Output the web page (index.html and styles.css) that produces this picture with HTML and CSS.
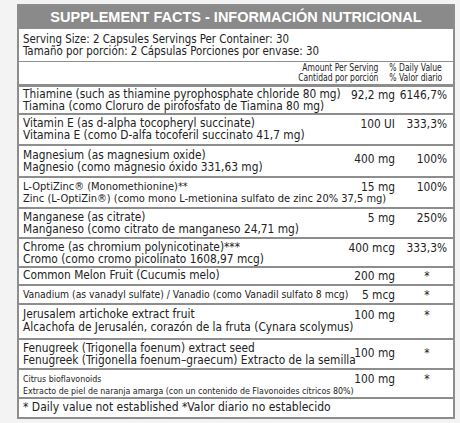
FILE: index.html
```html
<!DOCTYPE html>
<html lang="es">
<head>
    <meta charset="UTF-8">
    <meta name="viewport" content="width=device-width, initial-scale=1.0">
    <title>Supplement Facts</title>
    <link rel="stylesheet" href="styles.css">
</head>
<body>
    <div class="facts">
        <div class="facts-title">SUPPLEMENT FACTS - INFORMACIÓN NUTRICIONAL</div>

        <div class="serving">
            <div>Serving Size: 2 Capsules Servings Per Container: 30</div>
            <div>Tamaño por porción: 2 Cápsulas Porciones por envase: 30</div>
        </div>

        <div class="col-head">
            <div class="col-amount">Amount Per Serving<br>Cantidad por porción</div>
            <div class="col-dv">% Daily Value<br>% Valor diario</div>
        </div>

        <div class="row row-thiamine">
            <div class="name">
                <div>Thiamine (such as thiamine pyrophosphate chloride 80 mg)</div>
                <div>Tiamina (como Cloruro de pirofosfato de Tiamina 80 mg)</div>
            </div>
            <div class="amount">92,2 mg</div>
            <div class="dv">6146,7%</div>
        </div>

        <div class="row">
            <div class="name">
                <div>Vitamin E (as d-alpha tocopheryl succinate)</div>
                <div>Vitamina E (como D-alfa tocoferil succinato 41,7 mg)</div>
            </div>
            <div class="amount">100 UI</div>
            <div class="dv">333,3%</div>
        </div>

        <div class="row row-magnesium">
            <div class="name">
                <div>Magnesium (as magnesium oxide)</div>
                <div>Magnesio (como magnesio óxido 331,63 mg)</div>
            </div>
            <div class="amount">400 mg</div>
            <div class="dv">100%</div>
        </div>

        <div class="row row-zinc">
            <div class="name small">
                <div>L-OptiZinc® (Monomethionine)**</div>
                <div>Zinc (L-OptiZin®) (como mono L-metionina sulfato de zinc 20% 37,5 mg)</div>
            </div>
            <div class="amount">15 mg</div>
            <div class="dv">100%</div>
        </div>

        <div class="row row-manganese">
            <div class="name">
                <div>Manganese (as citrate)</div>
                <div>Manganeso (como citrato de manganeso 24,71 mg)</div>
            </div>
            <div class="amount">5 mg</div>
            <div class="dv">250%</div>
        </div>

        <div class="row row-chrome">
            <div class="name">
                <div>Chrome (as chromium polynicotinate)***</div>
                <div>Cromo (como cromo picolinato 1608,97 mcg)</div>
            </div>
            <div class="amount">400 mcg</div>
            <div class="dv">333,3%</div>
        </div>

        <div class="row row-single row-melon">
            <div class="name">
                <div>Common Melon Fruit (Cucumis melo)</div>
            </div>
            <div class="amount">200 mg</div>
            <div class="dv star">*</div>
        </div>

        <div class="row row-single">
            <div class="name narrow">
                <div>Vanadium (as vanadyl sulfate) / Vanadio (como Vanadil sulfato 8 mcg)</div>
            </div>
            <div class="amount">5 mcg</div>
            <div class="dv star">*</div>
        </div>

        <div class="row row-loose">
            <div class="name">
                <div>Jerusalem artichoke extract fruit</div>
                <div>Alcachofa de Jerusalén, corazón de la fruta (Cynara scolymus)</div>
            </div>
            <div class="amount">100 mg</div>
            <div class="dv star">*</div>
        </div>

        <div class="row row-fenugreek">
            <div class="name">
                <div>Fenugreek (Trigonella foenum) extract seed</div>
                <div>Fenugreek (Trigonella foenum–graecum) Extracto de la semilla</div>
            </div>
            <div class="amount">100 mg</div>
            <div class="dv star">*</div>
        </div>

        <div class="row row-citrus">
            <div class="name tiny">
                <div>Citrus bioflavonoids</div>
                <div>Extracto de piel de naranja amarga (con un contenido de Flavonoides cítricos 80%)</div>
            </div>
            <div class="amount">100 mg</div>
            <div class="dv star">*</div>
        </div>

        <div class="footnote">* Daily value not established *Valor diario no establecido</div>
    </div>
</body>
</html>
```

FILE: styles.css
```css
:root {
    --line: #8d8d8d;
    --title-bg: #8a8a8a;
    --page-bg: #f3f3f3;
    --ink: #222;
}

body {
    margin: 0;
    background: var(--page-bg);
    color: var(--ink);
    font-family: 'DejaVu Sans Condensed', 'Liberation Sans', sans-serif;
}

.facts {
    box-sizing: border-box;
    width: 438px;
    margin: 4px 0 0 17px;
    background: #fff;
    border: 2px solid var(--line);
}

.facts-title {
    height: 22px;
    line-height: 22px;
    background: var(--title-bg);
    color: #fff;
    text-align: center;
    font-family: 'Liberation Sans', Arial, sans-serif;
    font-weight: bold;
    font-size: 14.5px;
}

.serving {
    height: 24px;
    padding: 4px 4px 4px;
    border-top: 1px solid var(--line);
    font-size: 11.4px;
    line-height: 12px;
}

.col-head {
    display: flex;
    justify-content: flex-end;
    align-items: center;
    gap: 1px;
    height: 21px;
    padding: 0 11px 1px 4px;
    border-top: 1px solid var(--line);
    font-size: 10px;
    line-height: 10px;
}

.col-head > div {
    transform: scaleX(0.85);
    transform-origin: right center;
}

.col-amount {
    text-align: right;
}

.row {
    display: grid;
    grid-template-columns: minmax(0, 1fr) 70px 52px;
    border-top: 2px solid var(--line);
    padding: 2px 6px 3px 4px;
    font-size: 11.8px;
    line-height: 12px;
}

.row-thiamine {
    border-top-width: 3px;
    padding-top: 1px;
    padding-bottom: 1px;
}

.name div {
    white-space: nowrap;
}

.name.small {
    font-size: 11px;
}

.name.tiny {
    font-size: 8.8px;
}

.name.narrow {
    font-size: 10.3px;
}

.amount,
.dv {
    text-align: right;
    white-space: nowrap;
    padding-top: 1px;
}

.dv.star {
    text-align: center;
    padding-left: 12px;
}

.row-magnesium {
    padding-top: 3px;
}

.row-magnesium .amount,
.row-magnesium .dv {
    padding-top: 4px;
}

.row-zinc {
    padding-top: 3px;
    padding-bottom: 2px;
}

.row-zinc .amount,
.row-zinc .dv {
    padding-top: 0;
}

.row-manganese {
    padding-bottom: 2px;
}

.row-chrome {
    padding-bottom: 1px;
}

.row-single {
    padding: 2px 6px 1px 4px;
    line-height: 13px;
}

.row-melon {
    padding-top: 1px;
}

.row-loose {
    padding-top: 3px;
    padding-bottom: 4px;
    line-height: 13px;
}

.row-fenugreek {
    padding-bottom: 2px;
}

.row-fenugreek .amount,
.row-fenugreek .dv {
    padding-top: 5px;
}

.row-citrus {
    padding-top: 3px;
    padding-bottom: 0;
}

.row-citrus .amount,
.row-citrus .dv {
    padding-top: 0;
}

.footnote {
    border-top: 2px solid var(--line);
    padding: 2px 4px 3px;
    font-size: 12px;
    line-height: 13px;
}
```
